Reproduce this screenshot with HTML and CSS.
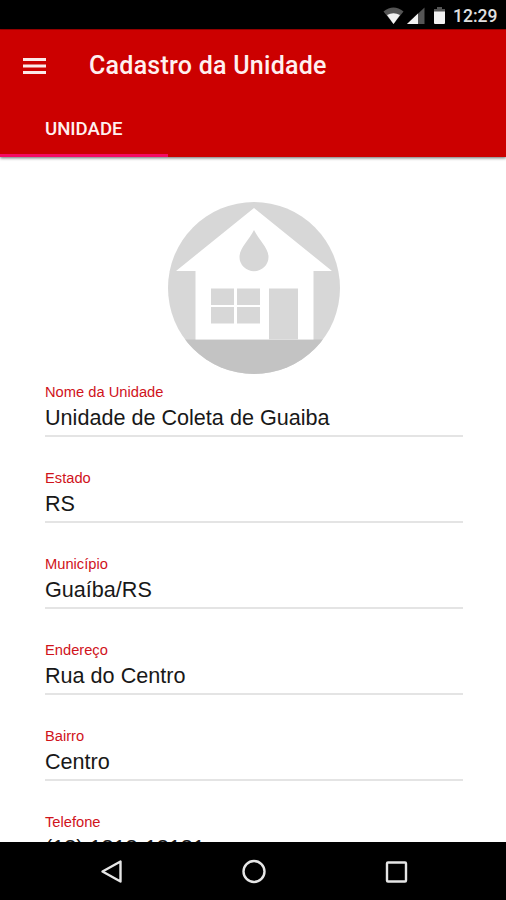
FILE: index.html
```
<!DOCTYPE html>
<html lang="pt-BR">
<head>
<meta charset="utf-8">
<title>Cadastro da Unidade</title>
<link rel="stylesheet" href="styles.css">
</head>
<body>
<div class="screen">
  <div class="status">
    <svg class="status-icons" width="64" height="30" viewBox="0 0 64 30">
      <path d="M.5 11.500Q10.500 3.500 20.500 11.500L10.500 24Z" fill="#555"/>
      <path d="M4 15Q10.500 11.500 17 15L10.500 24Z" fill="#f2f2f2"/>
      <path d="M41.500 7.500V24H24Z" fill="#555"/>
      <path d="M35 13.500V24H24Z" fill="#f2f2f2"/>
      <path d="M54 7h5v2h3v3H51V9h3z" fill="#555"/>
      <path d="M51 11.500h11V23q0 1-1 1h-9q-1 0-1-1z" fill="#f2f2f2"/>
    </svg>
    <span class="clock">12:29</span>
  </div>
  <header class="appbar">
    <div class="titlebar">
      <svg class="menu" width="24" height="18" viewBox="0 0 24 18"><path d="M0 2.500h23M0 9h23M0 15.500h23" stroke="#fbe9e9" stroke-width="3"/></svg>
      <h1>Cadastro da Unidade</h1>
    </div>
    <nav class="tabs"><span class="tab">UNIDADE</span></nav>
  </header>
  <main class="content">
    <svg class="house" width="172" height="172" viewBox="0 0 172 172">
      <defs><clipPath id="disc"><circle cx="86" cy="86" r="86"/></clipPath></defs>
      <g clip-path="url(#disc)">
        <path d="M0 0h172v172H0z" fill="#d7d7d7"/>
        <path d="M0 137.500h172V172H0z" fill="#c3c3c3"/>
        <path d="M86 6L164 69H145.500V137.500H27.500V69H8Z" fill="#fff"/>
        <path d="M86 28C81 38 71.500 46 71.500 55A14.500 14.200 0 0 0 100.500 55C100.500 46 91 38 86 28Z" fill="#d7d7d7"/>
        <path d="M43 86.500h23v16.500H43zM69 86.500h23v16.500H69zM43 105h23v16.500H43zM69 105h23v16.500H69zM101 86.500h29V137.500h-29z" fill="#d7d7d7"/>
      </g>
    </svg>
    <div class="field"><label>Nome da Unidade</label><span class="value">Unidade de Coleta de Guaiba</span></div>
    <div class="field"><label>Estado</label><span class="value">RS</span></div>
    <div class="field"><label>Município</label><span class="value">Guaíba/RS</span></div>
    <div class="field"><label>Endereço</label><span class="value">Rua do Centro</span></div>
    <div class="field"><label>Bairro</label><span class="value">Centro</span></div>
    <div class="field"><label>Telefone</label><span class="value">(18) 1818-18181</span></div>
  </main>
  <footer class="navbar">
    <svg width="506" height="58" viewBox="0 0 506 58" fill="none" stroke="#e6e6e6" stroke-width="2.400" stroke-linejoin="round">
      <path d="M102.500 29.500L120.500 19.500V39.500Z"/>
      <circle cx="254" cy="29.500" r="10.500"/>
      <rect x="387" y="20.500" width="19" height="19" rx="1"/>
    </svg>
  </footer>
</div>
</body>
</html>
```
FILE: styles.css
```
body { margin: 0; }
.screen { width: 506px; height: 900px; display: flex; flex-direction: column; overflow: hidden; background: #fff; font-family: "Liberation Sans", Arial, sans-serif; }
.status { height: 29px; flex: none; background: #000; display: flex; justify-content: flex-end; padding-right: 9px; border-bottom: 1px solid #a30000; }
.status-icons { margin-right: 6px; }
.clock { font: 500 17.5px/32px Roboto, sans-serif; color: #e0e0e0; width: 44px; white-space: nowrap; }
.appbar { height: 127px; flex: none; background: #c00; box-shadow: 0 1px 3px rgba(0,0,0,.6); display: flex; flex-direction: column; }
.titlebar { height: 71px; display: flex; align-items: center; padding-left: 23px; }
.menu { margin-right: 42px; }
h1 { margin: 0; font: 500 25px/30px Roboto, sans-serif; letter-spacing: .25px; color: #fff0f0; white-space: nowrap; }
.tabs { height: 56px; display: flex; }
.tab { box-sizing: border-box; width: 168px; height: 56px; padding-left: 45px; border-bottom: 3px solid #f50a62; font: 500 18.6px/56px Roboto, sans-serif; color: #fff0f0; }
.content { flex: 1; min-height: 0; overflow: hidden; padding: 45px 43px 0 45px; display: flex; flex-direction: column; }
.house { flex: none; margin: 0 0 9px 123px; }
.field { flex: none; box-sizing: border-box; height: 54px; margin-bottom: 32px; border-bottom: 2px solid #e4e4e4; display: flex; flex-direction: column; }
.field label { font-size: 14.7px; line-height: 18px; color: #d0131b; white-space: nowrap; }
.value { font-size: 21.6px; line-height: 34px; color: #181818; white-space: nowrap; }
.navbar { height: 58px; flex: none; background: #000; }
.navbar svg { display: block; }
```
